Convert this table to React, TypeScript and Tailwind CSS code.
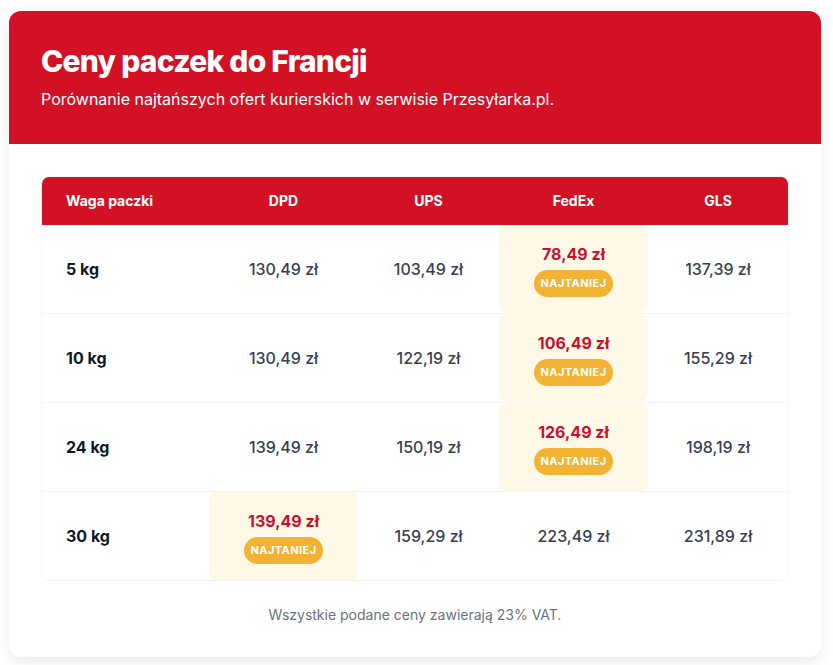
import React from "react";

const carriers = ["DPD", "UPS", "FedEx", "GLS"];

const rows = [
  { weight: "5 kg", prices: ["130,49 zł", "103,49 zł", "78,49 zł", "137,39 zł"], best: 2 },
  { weight: "10 kg", prices: ["130,49 zł", "122,19 zł", "106,49 zł", "155,29 zł"], best: 2 },
  { weight: "24 kg", prices: ["139,49 zł", "150,19 zł", "126,49 zł", "198,19 zł"], best: 2 },
  { weight: "30 kg", prices: ["139,49 zł", "159,29 zł", "223,49 zł", "231,89 zł"], best: 0 },
];

const cols = "grid grid-cols-[167px_149px_141px_149px_140px]";

export default function App() {
  return (
    <div className="min-h-screen bg-white px-[9px] pt-[11px] font-['Inter',sans-serif]">
      <div className="w-[812px] overflow-hidden rounded-xl bg-white shadow-[0_4px_16px_rgba(0,0,0,0.09)]">
        {/* Header */}
        <div className="bg-[#d31124] px-8 pt-8 pb-[33px]">
          <h1 className="text-[30px] leading-9 font-extrabold tracking-tight text-white">
            Ceny paczek do Francji
          </h1>
          <p className="mt-2 text-base leading-6 text-white">
            Porównanie najtańszych ofert kurierskich w serwisie Przesyłarka.pl.
          </p>
        </div>

        {/* Table */}
        <div className="px-8 pt-8 pb-8">
          <div className="overflow-hidden rounded-lg border border-gray-100">
            <div className={`${cols} h-12 items-center bg-[#d31124] text-sm font-bold text-white`}>
              <div className="pl-6">Waga paczki</div>
              {carriers.map((c) => (
                <div key={c} className="text-center">
                  {c}
                </div>
              ))}
            </div>

            {rows.map((row, i) => (
              <div
                key={row.weight}
                className={`${cols} h-[88px] ${i < rows.length - 1 ? "border-b border-gray-100 box-content" : ""}`}
              >
                <div className="flex items-center pl-6 text-base font-bold text-gray-900">
                  {row.weight}
                </div>
                {row.prices.map((p, j) =>
                  j === row.best ? (
                    <div
                      key={j}
                      className="flex flex-col items-center justify-center gap-1 rounded-lg bg-[#fef8e6]"
                    >
                      <span className="text-base leading-6 font-bold text-[#c8102e]">{p}</span>
                      <span className="rounded-full bg-[#f2b233] px-1.5 py-1.5 text-[11px] leading-[15px] font-bold tracking-[0.04em] text-white">
                        NAJTANIEJ
                      </span>
                    </div>
                  ) : (
                    <div
                      key={j}
                      className="flex items-center justify-center text-base font-medium text-gray-700"
                    >
                      {p}
                    </div>
                  )
                )}
              </div>
            ))}
          </div>

          <p className="mt-6 text-center text-sm leading-5 text-gray-500">
            Wszystkie podane ceny zawierają 23% VAT.
          </p>
        </div>
      </div>
    </div>
  );
}
